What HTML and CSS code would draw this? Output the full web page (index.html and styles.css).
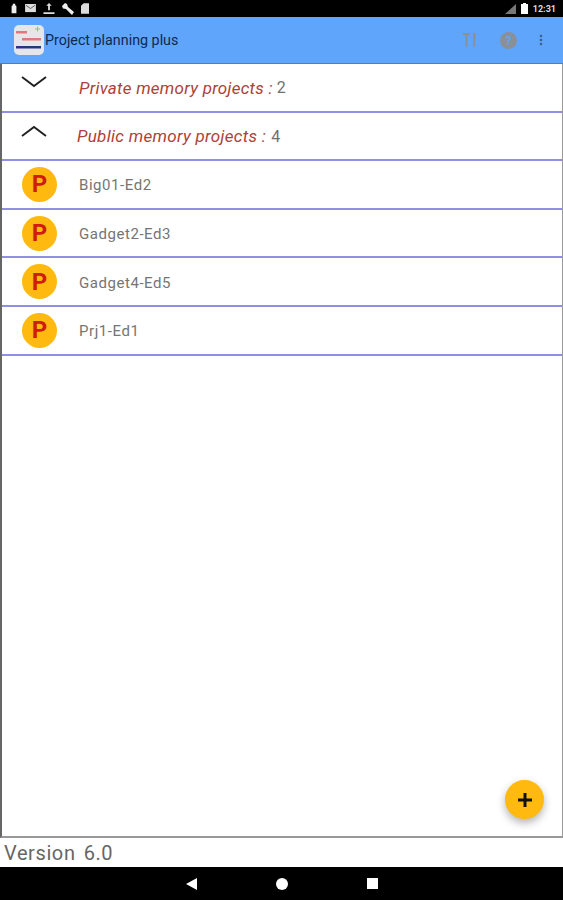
FILE: index.html
```html
<!DOCTYPE html>
<html lang="en">
<head>
    <meta charset="UTF-8">
    <title>Project planning plus</title>
    <link rel="stylesheet" href="styles.css">
</head>
<body>

<div class="status-bar">
    <div class="status-icons">
        <svg width="8" height="11" viewBox="0 0 10 12"><path d="M3.500 0h3v2l1.500 1v9h-6V3l1.500-1z" fill="#eee"/></svg>
        <svg width="11" height="9" viewBox="0 0 12 10"><path d="M0 0h12v9H0z" fill="#ddd"/><path d="M1 1.500l5 3.500 5-3.500" fill="none" stroke="#555" stroke-width="1"/></svg>
        <svg width="12" height="11" viewBox="0 0 12 12"><path d="M6 0l3 3H7v5H5V3H3zM0 10h12v2H0z" fill="#ddd"/></svg>
        <svg width="12" height="12" viewBox="0 0 12 12"><path d="M0 3l3-3 2 1 1 3 6 5-2 3-6-6-3-.5z" fill="#eee"/></svg>
        <svg width="8" height="11" viewBox="0 0 9 12"><path d="M3 0h6v12H0V3z" fill="#ddd"/></svg>
    </div>
    <div class="status-right">
        <svg width="14" height="10" viewBox="0 0 14 10"><path d="M14 0v10H3z" fill="#777"/></svg>
        <svg class="battery" width="7" height="11" viewBox="0 0 7 11"><path d="M2 0h3v1h2v10H0V1h2z" fill="#fff"/></svg>
        <span class="clock">12:31</span>
    </div>
</div>

<header class="app-bar">
    <svg class="app-icon" width="30" height="30" viewBox="0 0 30 30">
        <rect width="30" height="30" rx="5" fill="#e6e6ea"/>
        <rect x="2" y="6" width="11" height="2.500" fill="#e0797e"/>
        <rect x="8" y="13" width="19" height="2.500" fill="#e0797e"/>
        <rect x="2" y="21" width="25" height="2.500" fill="#2c3480"/>
        <path d="M21 4h5M23.500 1.500v5" stroke="#8fbf9a" stroke-width="1"/>
    </svg>
    <span class="app-title">Project planning plus</span>
    <div class="app-actions">
        <svg width="16" height="16" viewBox="0 0 16 16"><path d="M1 1h7v2H5.500v12h-2V3H1zM11 1h2.500v5l-.3 1v8h-1.900V7l-.3-1z" fill="#8b8f96"/></svg>
        <svg width="17" height="17" viewBox="0 0 17 17"><circle cx="8.500" cy="8.500" r="8.500" fill="#8b8f96"/><text x="8.500" y="12.500" class="help-mark">?</text></svg>
        <svg width="4" height="12" viewBox="0 0 4 12"><circle cx="2" cy="2" r="1.300" fill="#3d5f8c"/><circle cx="2" cy="6" r="1.300" fill="#3d5f8c"/><circle cx="2" cy="10" r="1.300" fill="#3d5f8c"/></svg>
    </div>
</header>

<main class="project-list">
    <div class="row group-row">
        <svg class="chevron" width="26" height="12" viewBox="0 0 26 12"><path d="M1 1l12 9 12-9" fill="none" stroke="#222" stroke-width="2"/></svg>
        <span class="group-label">Private memory projects :</span><span class="group-count">2</span>
    </div>
    <div class="row group-row">
        <svg class="chevron" width="26" height="12" viewBox="0 0 26 12"><path d="M1 11l12-9 12 9" fill="none" stroke="#222" stroke-width="2"/></svg>
        <span class="group-label shifted">Public memory projects :</span><span class="group-count public">4</span>
    </div>
    <div class="row project-row"><span class="badge">P</span><span class="project-name">Big01-Ed2</span></div>
    <div class="row project-row"><span class="badge">P</span><span class="project-name">Gadget2-Ed3</span></div>
    <div class="row project-row"><span class="badge">P</span><span class="project-name">Gadget4-Ed5</span></div>
    <div class="row project-row"><span class="badge">P</span><span class="project-name">Prj1-Ed1</span></div>
    <button class="fab">
        <svg width="18" height="18" viewBox="0 0 18 18"><path d="M9 2v14M2 9h14" stroke="#111" stroke-width="3"/></svg>
    </button>
</main>

<div class="version">Version&nbsp; 6.0</div>

<nav class="nav-bar">
    <svg width="11" height="12" viewBox="0 0 11 12"><path d="M11 0v12L0 6z" fill="#fff"/></svg>
    <svg width="12" height="12" viewBox="0 0 12 12"><circle cx="6" cy="6" r="6" fill="#fff"/></svg>
    <svg width="11" height="11" viewBox="0 0 11 11"><rect width="11" height="11" fill="#fff"/></svg>
</nav>

</body>
</html>
```

FILE: styles.css
```css
body {
    margin: 0;
    width: 563px;
    height: 900px;
    display: flex;
    flex-direction: column;
    font-family: 'Roboto', sans-serif;
    background: #fff;
    overflow: hidden;
}
.status-bar {
    height: 17px;
    background: #000;
    display: flex;
    justify-content: space-between;
    align-items: center;
    padding: 0 7px 0 10px;
}
.status-icons {
    display: flex;
    align-items: center;
    gap: 7px;
}
.status-right {
    display: flex;
    align-items: center;
    gap: 5px;
}
.clock {
    color: #ddd;
    font-size: 9px;
    font-weight: 700;
}
.app-bar {
    height: 46px;
    background: #5fa5fb;
    border-bottom: 1px solid #4a80c4;
    display: flex;
    align-items: center;
    padding: 0 20px 0 14px;
}
.app-icon {
    flex: none;
    margin-right: 1px;
}
.app-title {
    font-size: 14.300px;
    color: #10294f;
}
.app-actions {
    margin-left: auto;
    display: flex;
    align-items: center;
    gap: 22px;
}
.help-mark {
    font-size: 12px;
    font-weight: 700;
    fill: #5fa5fb;
    text-anchor: middle;
}
.project-list {
    flex: 1;
    position: relative;
    border-left: 2px solid #666;
    border-right: 1px solid #999;
    border-bottom: 2px solid #999;
}
.row {
    height: 46.600px;
    border-bottom: 2px solid #8f8fe6;
    display: flex;
    align-items: center;
}
.chevron {
    flex: none;
    margin: -10px 0 0 19px;
}
.group-label {
    font-size: 17px;
    font-style: italic;
    letter-spacing: 0.25px;
    color: #ab4238;
    margin: 1px 0 0 32px;
}
.group-label.shifted {
    margin-left: 30px;
    letter-spacing: 0.3px;
}
.group-count {
    font-size: 16px;
    color: #707070;
    margin: 1px 0 0 4px;
}
.group-count.public {
    margin-left: 5px;
}
.badge {
    flex: none;
    width: 35px;
    height: 35px;
    border-radius: 50%;
    margin-left: 20px;
    background: #ffb90f;
    color: #d01c10;
    font-size: 24px;
    font-weight: 700;
    display: flex;
    align-items: center;
    justify-content: center;
}
.project-name {
    font-size: 15px;
    color: #757575;
    letter-spacing: 0.55px;
    margin: 2px 0 0 22px;
}
.fab {
    position: absolute;
    right: 18px;
    bottom: 17px;
    width: 39px;
    height: 39px;
    padding: 0;
    border: none;
    border-radius: 50%;
    background: #ffb90f;
    display: flex;
    align-items: center;
    justify-content: center;
    box-shadow: 0 4px 8px rgba(0, 0, 0, 0.3);
}
.version {
    height: 29px;
    line-height: 30px;
    padding-left: 4px;
    font-size: 20px;
    color: #666;
    letter-spacing: 0.6px;
    word-spacing: -1.5px;
}
.nav-bar {
    height: 33px;
    background: #000;
    display: flex;
    align-items: center;
    justify-content: center;
    gap: 79px;
}
```
